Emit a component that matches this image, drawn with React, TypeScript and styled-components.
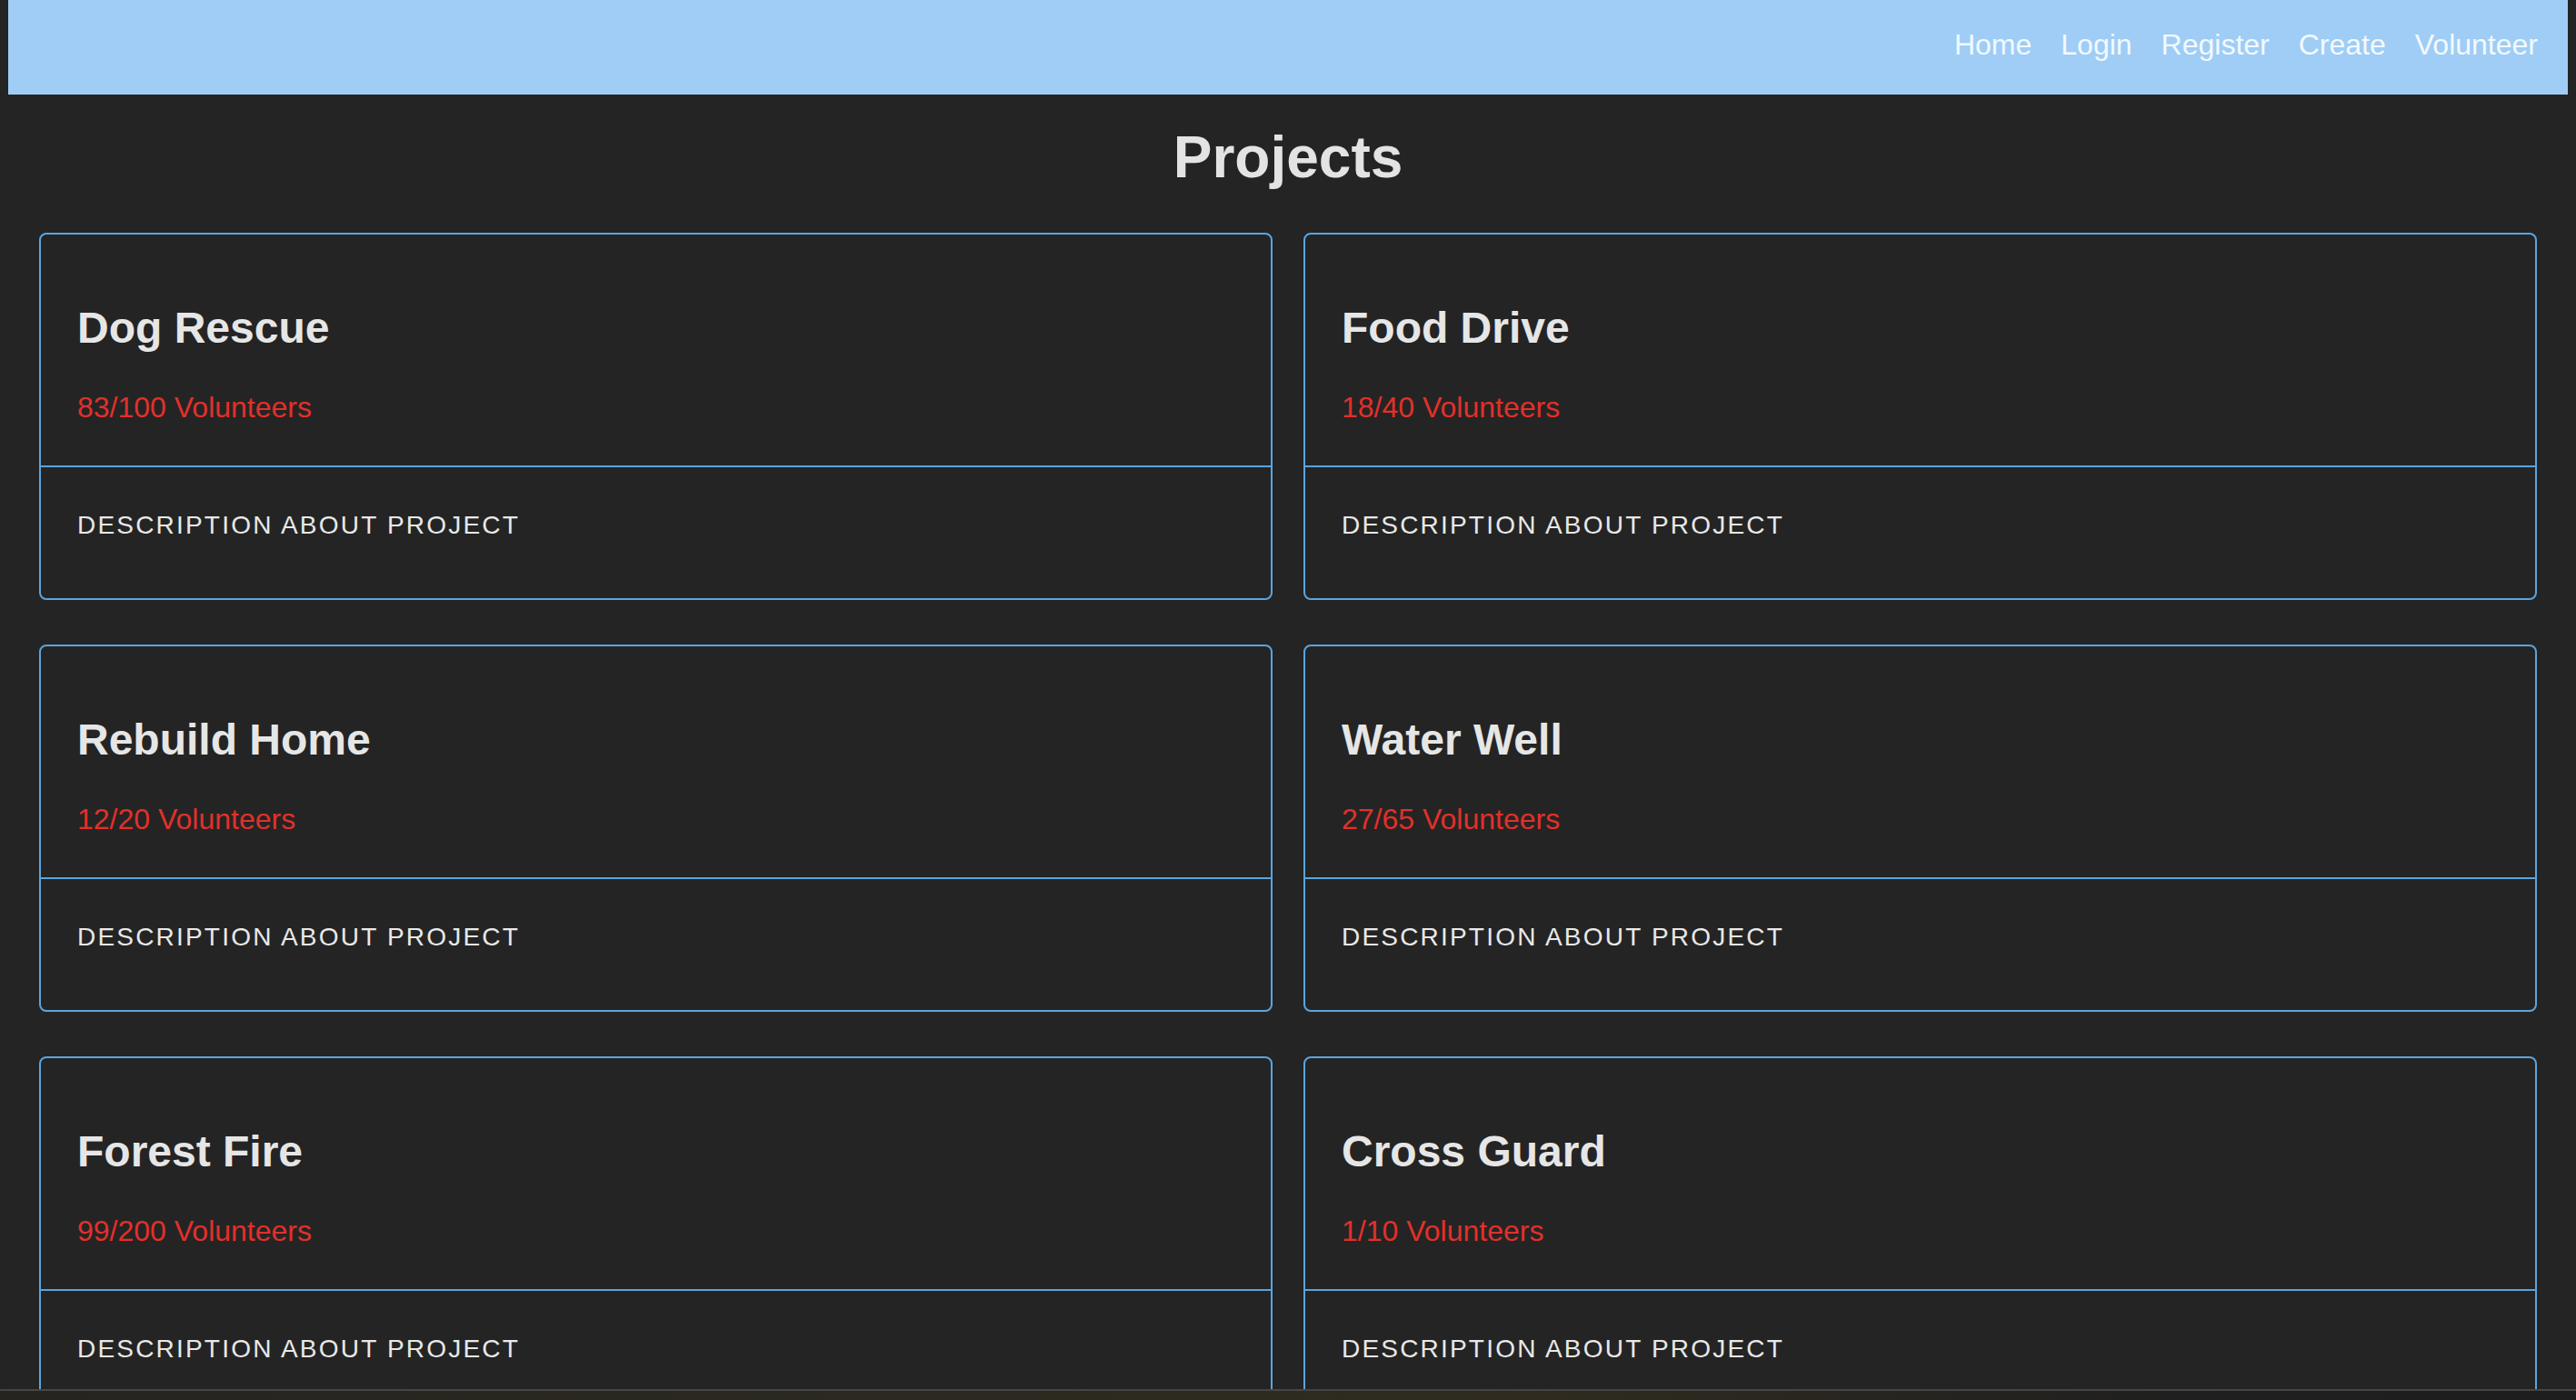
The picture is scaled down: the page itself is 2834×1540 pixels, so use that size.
import React from "react";
import styled, { createGlobalStyle } from "styled-components";

const GlobalStyle = createGlobalStyle`
  html, body {
    margin: 0;
    padding: 0;
    background: #242424;
    font-family: "Liberation Sans", Arial, Helvetica, sans-serif;
    color: #e4e4e4;
  }
  * { box-sizing: border-box; }
`;

const Page = styled.div`
  padding: 0 9px;
`;

const Header = styled.header`
  height: 104px;
  background: #9fcdf5;
  display: flex;
  justify-content: flex-end;
  align-items: center;
  gap: 32px;
  padding: 0 33px 5px 0;
`;

const NavLink = styled.a`
  font-size: 32px;
  line-height: 37px;
  color: #f3f9ff;
  text-decoration: none;
  cursor: pointer;
`;

const Title = styled.h1`
  margin: 32px 0 46px;
  font-size: 64px;
  line-height: 74px;
  font-weight: 700;
  text-align: center;
  color: #e3e3e3;
`;

const Grid = styled.main`
  display: grid;
  grid-template-columns: 1fr 1fr;
  column-gap: 34px;
  row-gap: 49px;
  padding: 0 34px 60px;
`;

const Card = styled.section`
  border: 2px solid #5aa5e0;
  border-radius: 8px;
  display: flex;
  flex-direction: column;
`;

const CardTop = styled.div`
  padding: 75px 40px 45px;
  border-bottom: 2px solid #5aa5e0;
`;

const CardTitle = styled.h2`
  margin: 0 0 42px;
  font-size: 48px;
  line-height: 55px;
  font-weight: 700;
  color: #e6e6e6;
`;

const Volunteers = styled.p`
  margin: 0;
  font-size: 32px;
  line-height: 37px;
  color: #e2302a;
`;

const CardBottom = styled.div`
  padding: 48px 40px 64px;
`;

const Description = styled.p`
  margin: 0;
  font-size: 28px;
  line-height: 32px;
  letter-spacing: 2.2px;
  text-transform: uppercase;
  color: #e8e8e8;
`;

const BottomEdge = styled.div`
  position: fixed;
  left: 0;
  right: 0;
  bottom: 0;
  height: 12px;
  border-top: 2px solid #46453f;
  background: linear-gradient(90deg, #25241f 0%, #2c2a20 40%, #2f2b1f 60%, #1f1f1f 85%, #1e1e1e 100%);
`;

type Project = { name: string; have: number; need: number };

const projects: Project[] = [
  { name: "Dog Rescue", have: 83, need: 100 },
  { name: "Food Drive", have: 18, need: 40 },
  { name: "Rebuild Home", have: 12, need: 20 },
  { name: "Water Well", have: 27, need: 65 },
  { name: "Forest Fire", have: 99, need: 200 },
  { name: "Cross Guard", have: 1, need: 10 },
];

const links = ["Home", "Login", "Register", "Create", "Volunteer"];

export default function App() {
  return (
    <>
      <GlobalStyle />
      <Page>
        <Header>
          {links.map((l) => (
            <NavLink key={l}>{l}</NavLink>
          ))}
        </Header>
        <Title>Projects</Title>
        <Grid>
          {projects.map((p) => (
            <Card key={p.name}>
              <CardTop>
                <CardTitle>{p.name}</CardTitle>
                <Volunteers>
                  {p.have}/{p.need} Volunteers
                </Volunteers>
              </CardTop>
              <CardBottom>
                <Description>Description about project</Description>
              </CardBottom>
            </Card>
          ))}
        </Grid>
      </Page>
      <BottomEdge />
    </>
  );
}
